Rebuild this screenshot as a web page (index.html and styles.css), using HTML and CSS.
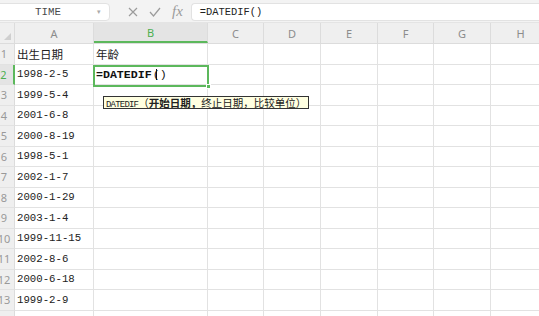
FILE: index.html
```html
<!DOCTYPE html>
<html lang="zh-CN">
<head>
    <meta charset="UTF-8">
    <title>DATEDIF</title>
    <link rel="stylesheet" href="styles.css">
</head>
<body>
    <div class="app">
        <div class="formula-bar">
            <div class="name-box">
                <span class="name">TIME</span>
                <span class="drop">&#9662;</span>
            </div>
            <div class="fx-icons">
                <svg width="10" height="10" viewBox="0 0 10 10"><path d="M1 1 L9 9 M9 1 L1 9" stroke="#9b9b9b" stroke-width="1.2" fill="none"/></svg>
                <svg width="12" height="10" viewBox="0 0 12 10"><path d="M1 5 L4.5 9 L11 1" stroke="#9b9b9b" stroke-width="1.2" fill="none"/></svg>
                <span class="fx">fx</span>
            </div>
            <div class="formula-input">=DATEDIF()</div>
        </div>

        <div class="sheet">
            <div class="row head">
                <div class="corner"><span class="tri"></span></div>
                <div class="col">A</div>
                <div class="col active">B</div>
                <div class="col">C</div>
                <div class="col">D</div>
                <div class="col">E</div>
                <div class="col">F</div>
                <div class="col">G</div>
                <div class="col">H</div>
            </div>
            <div class="row">
                <div class="rh">1</div>
                <div class="c zh">出生日期</div>
                <div class="c zh">年龄</div>
                <div class="c"></div><div class="c"></div><div class="c"></div><div class="c"></div><div class="c"></div><div class="c"></div>
            </div>
            <div class="row">
                <div class="rh active">2</div>
                <div class="c">1998-2-5</div>
                <div class="c edit">=DATEDIF <span class="paren">(<i class="caret"></i>)</span></div>
                <div class="c"></div><div class="c"></div><div class="c"></div><div class="c"></div><div class="c"></div><div class="c"></div>
            </div>
            <div class="row">
                <div class="rh">3</div>
                <div class="c">1999-5-4</div>
                <div class="c"></div><div class="c"></div><div class="c"></div><div class="c"></div><div class="c"></div><div class="c"></div><div class="c"></div>
            </div>
            <div class="row">
                <div class="rh">4</div>
                <div class="c">2001-6-8</div>
                <div class="c"></div><div class="c"></div><div class="c"></div><div class="c"></div><div class="c"></div><div class="c"></div><div class="c"></div>
            </div>
            <div class="row">
                <div class="rh">5</div>
                <div class="c">2000-8-19</div>
                <div class="c"></div><div class="c"></div><div class="c"></div><div class="c"></div><div class="c"></div><div class="c"></div><div class="c"></div>
            </div>
            <div class="row">
                <div class="rh">6</div>
                <div class="c">1998-5-1</div>
                <div class="c"></div><div class="c"></div><div class="c"></div><div class="c"></div><div class="c"></div><div class="c"></div><div class="c"></div>
            </div>
            <div class="row">
                <div class="rh">7</div>
                <div class="c">2002-1-7</div>
                <div class="c"></div><div class="c"></div><div class="c"></div><div class="c"></div><div class="c"></div><div class="c"></div><div class="c"></div>
            </div>
            <div class="row">
                <div class="rh">8</div>
                <div class="c">2000-1-29</div>
                <div class="c"></div><div class="c"></div><div class="c"></div><div class="c"></div><div class="c"></div><div class="c"></div><div class="c"></div>
            </div>
            <div class="row">
                <div class="rh">9</div>
                <div class="c">2003-1-4</div>
                <div class="c"></div><div class="c"></div><div class="c"></div><div class="c"></div><div class="c"></div><div class="c"></div><div class="c"></div>
            </div>
            <div class="row">
                <div class="rh">10</div>
                <div class="c">1999-11-15</div>
                <div class="c"></div><div class="c"></div><div class="c"></div><div class="c"></div><div class="c"></div><div class="c"></div><div class="c"></div>
            </div>
            <div class="row">
                <div class="rh">11</div>
                <div class="c">2002-8-6</div>
                <div class="c"></div><div class="c"></div><div class="c"></div><div class="c"></div><div class="c"></div><div class="c"></div><div class="c"></div>
            </div>
            <div class="row">
                <div class="rh">12</div>
                <div class="c">2000-6-18</div>
                <div class="c"></div><div class="c"></div><div class="c"></div><div class="c"></div><div class="c"></div><div class="c"></div><div class="c"></div>
            </div>
            <div class="row">
                <div class="rh">13</div>
                <div class="c">1999-2-9</div>
                <div class="c"></div><div class="c"></div><div class="c"></div><div class="c"></div><div class="c"></div><div class="c"></div><div class="c"></div>
            </div>
            <div class="row">
                <div class="rh">14</div>
                <div class="c"></div>
                <div class="c"></div><div class="c"></div><div class="c"></div><div class="c"></div><div class="c"></div><div class="c"></div><div class="c"></div>
            </div>

            <div class="selection"><span class="handle"></span></div>
            <div class="tip"><span class="lat">DATEDIF</span>（<b>开始日期，</b>终止日期，比较单位）</div>
        </div>
    </div>
</body>
</html>
```

FILE: styles.css
```css
* {
    box-sizing: border-box;
}

body {
    margin: 0;
    background: #fff;
    overflow: hidden;
    font-family: "Liberation Mono", "Noto Sans CJK SC", monospace;
    color: #222;
}

.app {
    width: 539px;
    height: 316px;
    overflow: hidden;
}

/* formula bar */
.formula-bar {
    display: flex;
    align-items: center;
    height: 23px;
    padding: 3px 0 2px;
    background: #f3f3f3;
    border-bottom: 1px solid #e4e4e4;
}

.name-box {
    display: flex;
    align-items: center;
    width: 120px;
    height: 18px;
    margin-left: -10px;
    background: #fff;
    border: 1px solid #e2e2e2;
    border-radius: 4px;
}

.name {
    flex: 1;
    text-align: center;
    font-size: 10.8px;
    color: #4a4a4a;
    padding-left: 8px;
}

.drop {
    width: 12px;
    font-size: 7px;
    color: #aaa;
    font-family: "DejaVu Sans", sans-serif;
}

.fx-icons {
    display: flex;
    align-items: center;
    gap: 11px;
    padding: 0 8px 0 18px;
}

.fx {
    font-family: "Liberation Serif", serif;
    font-style: italic;
    font-size: 15px;
    color: #9b9b9b;
    line-height: 1;
}

.formula-input {
    flex: 1;
    height: 18px;
    line-height: 16px;
    padding-left: 8px;
    font-size: 10.4px;
    color: #222;
    background: #fff;
    border: 1px solid #e2e2e2;
    border-right: none;
    border-radius: 4px 0 0 4px;
}

/* sheet */
.sheet {
    position: relative;
    margin-left: -6px;
}

.row {
    display: grid;
    grid-template-columns: 21px 79px 114px 56px 57px 57px 56px 57px 60px;
    height: 20.5px;
}

.row.head {
    height: 21px;
    background: #efefef;
    border-bottom: 1px solid #dcdcdc;
}

.corner {
    position: relative;
    border-right: 1px solid #dcdcdc;
}

.tri {
    position: absolute;
    right: 3px;
    bottom: 3px;
    width: 0;
    height: 0;
    border-left: 7px solid transparent;
    border-bottom: 7px solid #cfcfcf;
}

.col {
    display: flex;
    align-items: center;
    justify-content: center;
    font-family: "Noto Sans", sans-serif;
    font-size: 11px;
    color: #8c8c8c;
    border-right: 1px solid #dcdcdc;
}

.col.active {
    background: #e4e4e4;
    color: #4caf50;
    border-bottom: 2px solid #5cb85c;
}

.rh {
    display: flex;
    align-items: center;
    justify-content: center;
    font-family: "Noto Sans", sans-serif;
    font-size: 11px;
    color: #999;
    background: #efefef;
    border-right: 1px solid #dcdcdc;
    border-bottom: 1px solid #e2e2e2;
}

.rh.active {
    background: #e4e4e4;
    color: #4caf50;
    border-right: 2px solid #5cb85c;
}

.c {
    display: flex;
    align-items: center;
    padding-left: 2px;
    font-size: 10.7px;
    white-space: nowrap;
    border-right: 1px solid #e2e2e2;
    border-bottom: 1px solid #e2e2e2;
}

.c.zh {
    font-family: "Noto Sans CJK SC", sans-serif;
    font-size: 11.5px;
}

.c.edit {
    font-weight: bold;
    font-size: 11.6px;
    color: #111;
}

.paren {
    position: relative;
    margin-left: 1px;
    font-weight: normal;
}

.caret {
    position: absolute;
    left: 3.5px;
    top: 1px;
    bottom: 1px;
    width: 1px;
    background: #111;
}

.selection {
    position: absolute;
    left: 99px;
    top: 41.5px;
    width: 116px;
    height: 22px;
    border: 2px solid #5cb85c;
}

.handle {
    position: absolute;
    right: -4px;
    bottom: -4px;
    width: 5px;
    height: 5px;
    background: #5cb85c;
    border: 1px solid #fff;
}

.tip {
    position: absolute;
    left: 109px;
    top: 73px;
    height: 13px;
    padding: 0 2px;
    line-height: 11px;
    font-family: "Noto Sans CJK SC", sans-serif;
    font-size: 10.5px;
    color: #222;
    white-space: nowrap;
    background: #ffffe1;
    border: 1px solid #333;
}

.tip .lat {
    font-family: "Liberation Mono", monospace;
    font-size: 9px;
    letter-spacing: -0.8px;
}

.tip b {
    font-weight: bold;
}
```
